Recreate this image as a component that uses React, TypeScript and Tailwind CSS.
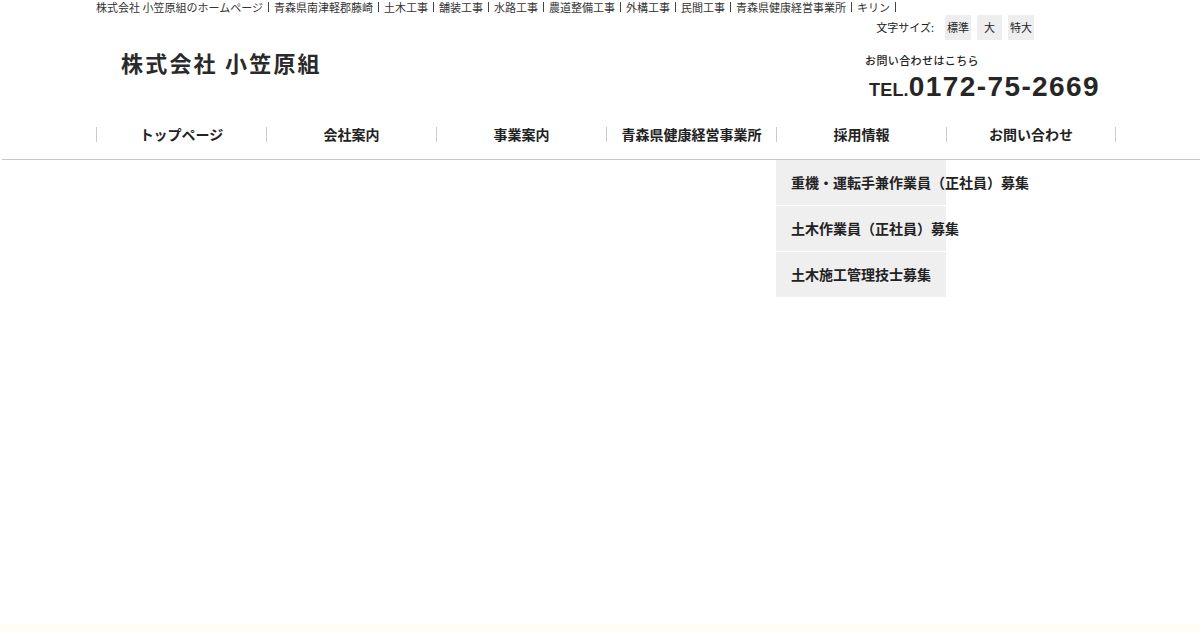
const jp = "font-['Noto_Sans_CJK_JP','Noto_Sans',sans-serif]";

const topLinks = [
  "株式会社 小笠原組のホームページ",
  "青森県南津軽郡藤崎",
  "土木工事",
  "舗装工事",
  "水路工事",
  "農道整備工事",
  "外構工事",
  "民間工事",
  "青森県健康経営事業所",
  "キリン",
];

const navItems = ["トップページ", "会社案内", "事業案内", "青森県健康経営事業所", "採用情報", "お問い合わせ"];

const recruit = ["重機・運転手兼作業員（正社員）募集", "土木作業員（正社員）募集", "土木施工管理技士募集"];

export default function App() {
  return (
    <div className={`${jp} relative h-[632px] w-[1200px] overflow-hidden bg-white text-[#222]`}>
      {/* header */}
      <div className="ml-[96px] w-[1020px]">
        <div className="flex h-[14px] items-center whitespace-nowrap text-[11px] leading-[14px] text-[#333]">
          {topLinks.map((t) => (
            <span key={t} className="flex items-center">
              {t}
              <span className="mx-[5px] inline-block h-[10px] w-px bg-[#444]" />
            </span>
          ))}
        </div>

        <div className="flex justify-end pr-[82px] pt-[1px]">
          <div className="flex items-center gap-[6px] text-[11px]">
            <span className="mr-[5px]">文字サイズ:</span>
            <span className="flex h-[25px] items-center bg-[#eee] px-[2px]">標準</span>
            <span className="flex h-[25px] items-center bg-[#eee] px-[7px]">大</span>
            <span className="flex h-[25px] items-center bg-[#eee] px-[2px]">特大</span>
          </div>
        </div>

        <div className="flex items-start justify-between">
          <div className="ml-[25px] mt-[9px] text-[22px] font-bold leading-[26px] tracking-[2.2px] text-[#2a2a2a]">
            株式会社&nbsp;小笠原組
          </div>
          <div className="mr-[16px] mt-[13px] flex flex-col">
            <div className="text-[11px] font-medium leading-[14px] tracking-[0.4px]">お問い合わせはこちら</div>
            <div className="ml-[4px] mt-[7px] flex items-baseline font-['Liberation_Sans',Arial,sans-serif] font-bold leading-[26px] text-[#262626]">
              <span className="text-[18px] tracking-[0.2px]">TEL.</span>
              <span className="text-[28px] tracking-[1.4px]">0172-75-2669</span>
            </div>
          </div>
        </div>

        <nav className="mt-[21px] flex h-[20px] items-center">
          {navItems.map((n, i) => (
            <div
              key={n}
              className={`flex h-[15px] w-[170px] items-center justify-center border-l border-[#ccc] text-[14px] font-bold leading-none ${
                i === navItems.length - 1 ? "border-r" : ""
              }`}
            >
              {n}
            </div>
          ))}
        </nav>
      </div>

      <div className="ml-[2px] mt-[15px] h-px bg-[#c8c8c8]" />

      {/* recruit dropdown */}
      <div className="absolute left-[776px] top-[160px] flex w-[170px] flex-col gap-px">
        {recruit.map((r) => (
          <div key={r} className="flex h-[45px] items-center whitespace-nowrap bg-[#efefef] pl-[15px] text-[14px] font-bold">
            {r}
          </div>
        ))}
      </div>

      <div className="absolute bottom-0 left-0 h-[8px] w-full bg-[#fffdf6]" />
    </div>
  );
}
